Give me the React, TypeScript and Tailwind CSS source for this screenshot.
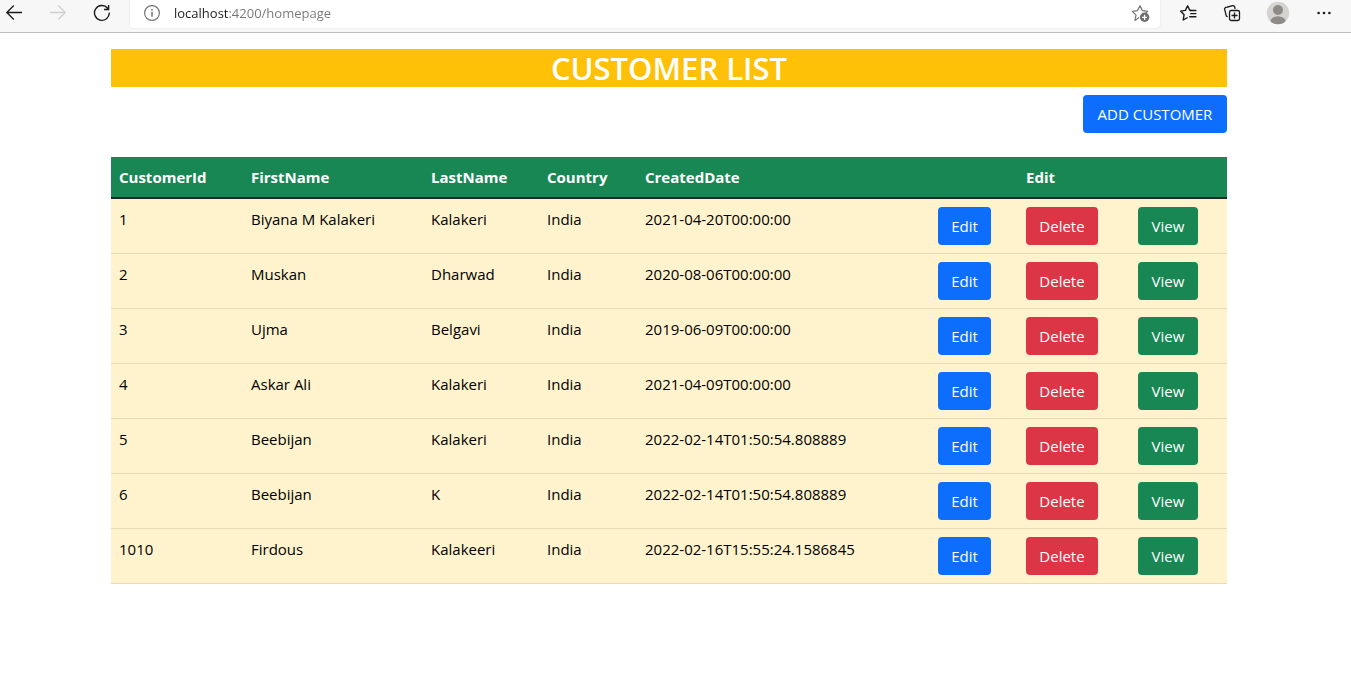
import type { ReactNode } from "react";

type Customer = {
  id: number;
  firstName: string;
  lastName: string;
  country: string;
  createdDate: string;
};

const customers: Customer[] = [
  { id: 1, firstName: "Biyana M Kalakeri", lastName: "Kalakeri", country: "India", createdDate: "2021-04-20T00:00:00" },
  { id: 2, firstName: "Muskan", lastName: "Dharwad", country: "India", createdDate: "2020-08-06T00:00:00" },
  { id: 3, firstName: "Ujma", lastName: "Belgavi", country: "India", createdDate: "2019-06-09T00:00:00" },
  { id: 4, firstName: "Askar Ali", lastName: "Kalakeri", country: "India", createdDate: "2021-04-09T00:00:00" },
  { id: 5, firstName: "Beebijan", lastName: "Kalakeri", country: "India", createdDate: "2022-02-14T01:50:54.808889" },
  { id: 6, firstName: "Beebijan", lastName: "K", country: "India", createdDate: "2022-02-14T01:50:54.808889" },
  { id: 1010, firstName: "Firdous", lastName: "Kalakeeri", country: "India", createdDate: "2022-02-16T15:55:24.1586845" },
];

type IconButtonProps = {
  label: string;
  disabled?: boolean;
  wide?: boolean;
  children: ReactNode;
};

function IconButton({ label, disabled, wide, children }: IconButtonProps) {
  return (
    <button
      type="button"
      aria-label={label}
      disabled={disabled}
      className={`flex h-[26px] shrink-0 items-center justify-center ${wide ? "w-8" : "w-7"}`}
    >
      {children}
    </button>
  );
}

function BackIcon() {
  return (
    <svg width="18" height="18" viewBox="0 0 18 18" fill="none" stroke="#1b1b1b" strokeWidth="1.3">
      <path d="M17 8.5H1.8M8.8 1.5l-7 7 7 7" />
    </svg>
  );
}

function ForwardIcon() {
  return (
    <svg width="18" height="18" viewBox="0 0 18 18" fill="none" stroke="#cfcfcf" strokeWidth="1.3">
      <path d="M1 8.5h15.2M9.2 1.5l7 7-7 7" />
    </svg>
  );
}

function ReloadIcon() {
  return (
    <svg width="18" height="18" viewBox="0 0 18 18" fill="none" stroke="#1b1b1b" strokeWidth="1.4">
      <path d="M16.3 8.6A7.4 7.4 0 1 1 14.6 4.2l.9 1M15.6 1v4.5H11" />
    </svg>
  );
}

function InfoIcon() {
  return (
    <svg width="18" height="18" viewBox="0 0 18 18" fill="none" stroke="#767676" strokeWidth="1.2" className="shrink-0">
      <circle cx="9" cy="9" r="7.4" />
      <path d="M9 7.8v5M9 5v1.6" strokeWidth="1.5" />
    </svg>
  );
}

function AddFavoriteIcon() {
  return (
    <svg width="20" height="20" viewBox="0 0 20 20" fill="none">
      <path
        d="M9 14.4 5 17.4l1-5.3-3.6-3.8 5-.7L10 2.8l2.5 4.8 5.2.7-2 1.8"
        stroke="#767676"
        strokeWidth="1.2"
        strokeLinejoin="round"
      />
      <circle cx="14.6" cy="14.3" r="4.7" fill="#6b6b6b" />
      <path d="M14.6 11.7v5.2M12 14.3h5.2" stroke="#fff" strokeWidth="1.3" />
    </svg>
  );
}

function FavoritesIcon() {
  return (
    <svg width="18" height="18" viewBox="0 0 18 18" fill="none" stroke="#1b1b1b" strokeWidth="1.4" strokeLinejoin="round">
      <path d="M12.4 6.6 10.6 6 8.6 1.8 6.4 6.4l-4.8.7 3.5 3.6-.9 5.3 4.5-2.5" />
      <path d="M10.8 6.5h6.6M11.2 9.6h6.2M10.2 12.7h7.2" strokeLinejoin="miter" />
    </svg>
  );
}

function CollectionsIcon() {
  return (
    <svg width="18" height="18" viewBox="0 0 18 18" fill="none" stroke="#1b1b1b" strokeWidth="1.3">
      <rect x="6.5" y="6.5" width="10" height="10" rx="1.8" />
      <path d="M11.5 8.5v6M8.5 11.5h6" />
      <path d="M4.6 12.8 3.3 12 1.6 5.2c-.2-.8.2-1.4 1-1.7l7.2-1.9c.8-.2 1.4.2 1.7 1l.6 2.2" strokeLinejoin="round" />
    </svg>
  );
}

function ProfileIcon() {
  return (
    <svg width="24" height="24" viewBox="0 0 24 24" className="shrink-0">
      <defs>
        <clipPath id="avatar">
          <circle cx="12" cy="12" r="11.2" />
        </clipPath>
      </defs>
      <circle cx="12" cy="12" r="11.2" fill="#d5d3d0" />
      <circle cx="12" cy="9" r="5" fill="#8e8a87" />
      <ellipse cx="12" cy="20.5" rx="7.6" ry="5.2" fill="#8e8a87" clipPath="url(#avatar)" />
    </svg>
  );
}

function MoreIcon() {
  return (
    <svg width="16" height="16" viewBox="0 0 16 16" fill="#1b1b1b">
      <circle cx="2.6" cy="8" r="1.3" />
      <circle cx="8" cy="8" r="1.3" />
      <circle cx="13.4" cy="8" r="1.3" />
    </svg>
  );
}

function BrowserBar() {
  return (
    <header className="flex h-[33px] items-start border-b border-[#bdbdbd] bg-[#f7f7f7]">
      <div className="flex w-[130px] shrink-0 justify-between pr-3.5">
        <IconButton label="Back"><BackIcon /></IconButton>
        <IconButton label="Forward" disabled><ForwardIcon /></IconButton>
        <IconButton label="Refresh"><ReloadIcon /></IconButton>
      </div>
      <div className="flex h-7 min-w-0 flex-1 items-center rounded-b bg-white pr-1.5 pb-0.5 pl-[13px] shadow-[0_0_3px_rgba(0,0,0,0.08)]">
        <InfoIcon />
        <input
          type="text"
          aria-label="Address"
          defaultValue="localhost:4200/homepage"
          className="ml-[13px] h-5 min-w-0 flex-1 bg-[linear-gradient(to_right,#1b1b1b_55px,#767676_55px)] bg-clip-text text-[13px] leading-5 text-transparent outline-none"
        />
        <IconButton label="Add this page to favorites"><AddFavoriteIcon /></IconButton>
      </div>
      <div className="flex shrink-0 gap-4 pr-[13px] pl-3.5">
        <IconButton label="Favorites"><FavoritesIcon /></IconButton>
        <IconButton label="Collections"><CollectionsIcon /></IconButton>
        <IconButton label="Profile" wide><ProfileIcon /></IconButton>
        <IconButton label="Settings and more"><MoreIcon /></IconButton>
      </div>
    </header>
  );
}

const buttonBase = "h-[38px] rounded text-[15px] leading-6 text-white";

export default function App() {
  return (
    <div className="min-h-screen bg-white font-['Segoe_UI','Open_Sans',sans-serif] text-[15px] leading-6 text-black">
      <BrowserBar />
      <div className="pr-[13px]">
        <main className="mx-auto max-w-[1140px] px-3 pt-4">
          <h1 className="bg-[#ffc107] text-center text-[31px] leading-[38px] font-semibold text-white">CUSTOMER LIST</h1>
          <div className="mt-2 flex justify-end">
            <button type="button" className={`${buttonBase} w-36 bg-[#0d6efd]`}>ADD CUSTOMER</button>
          </div>
          <table className="mt-6 w-full table-fixed border-separate border-spacing-0 text-left">
            <colgroup>
              <col className="w-[132px]" />
              <col className="w-[180px]" />
              <col className="w-[116px]" />
              <col className="w-[98px]" />
              <col />
              <col className="w-[88px]" />
              <col className="w-28" />
              <col className="w-[97px]" />
            </colgroup>
            <thead className="bg-[#198754] text-white [&_td]:border-b-2 [&_td]:border-[#212529] [&_th]:border-b-2 [&_th]:border-[#212529] [&_th]:p-2 [&_th]:font-bold">
              <tr>
                <th scope="col">CustomerId</th>
                <th scope="col">FirstName</th>
                <th scope="col">LastName</th>
                <th scope="col">Country</th>
                <th scope="col">CreatedDate</th>
                <td />
                <th scope="col">Edit</th>
                <td />
              </tr>
            </thead>
            <tbody className="bg-[#fff3cd] align-top [&_td]:border-b [&_td]:border-[#e6dbb9] [&_td]:p-2">
              {customers.map((c) => (
                <tr key={c.id}>
                  <td>{c.id}</td>
                  <td>{c.firstName}</td>
                  <td>{c.lastName}</td>
                  <td>{c.country}</td>
                  <td>{c.createdDate}</td>
                  <td>
                    <button type="button" className={`${buttonBase} block w-[53px] bg-[#0d6efd]`}>Edit</button>
                  </td>
                  <td>
                    <button type="button" className={`${buttonBase} block w-[72px] bg-[#dc3545]`}>Delete</button>
                  </td>
                  <td>
                    <button type="button" className={`${buttonBase} block w-[60px] bg-[#198754]`}>View</button>
                  </td>
                </tr>
              ))}
            </tbody>
          </table>
        </main>
      </div>
    </div>
  );
}
